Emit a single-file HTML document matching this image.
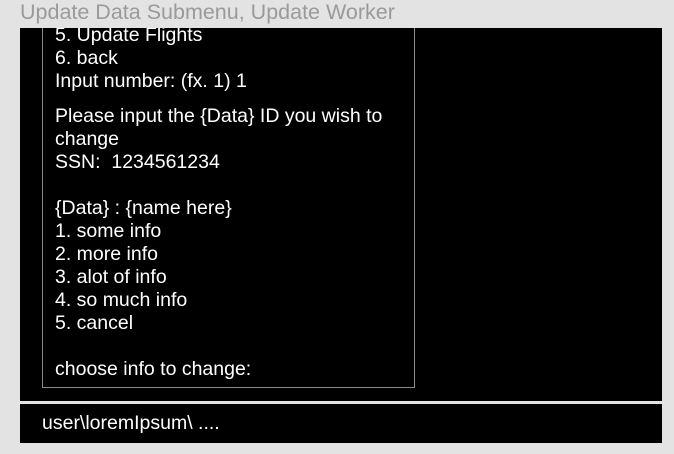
<!DOCTYPE html>
<html><head><style>
body{margin:0;width:674px;height:454px;background:#e3e3e3;position:relative;overflow:hidden;font-family:"Liberation Sans",sans-serif}
.t{position:absolute;left:20px;top:0px;font-size:21.5px;color:#9a9a9a;line-height:24px}
.p{position:absolute;left:20px;top:28px;width:642px;height:373px;background:#000;overflow:hidden}
.b{position:absolute;left:22px;top:-2px;width:371px;height:361px;border:1px solid #8a8a8a;border-top:none}
.x{position:absolute;left:12px;color:#fff;font-size:19.5px;line-height:23px;white-space:nowrap}
.bar{position:absolute;left:20px;top:404px;width:642px;height:39px;background:#000;color:#fff;font-size:19.5px;line-height:39px}
</style></head><body>
<div class="t">Update Data Submenu, Update Worker</div>
<div class="p"><div class="b">
<div class="x" style="top:-2px">5. Update Flights<br>6. back<br>Input number: (fx. 1) 1</div>
<div class="x" style="top:79px">Please input the {Data} ID you wish to<br>change<br>SSN:&nbsp; 1234561234<br><br>{Data} : {name here}<br>1. some info<br>2. more info<br>3. alot of info<br>4. so much info<br>5. cancel<br><br>choose info to change:</div>
</div></div>
<div class="bar"><span style="margin-left:22px">user\loremIpsum\ ....</span></div>
</body></html>
